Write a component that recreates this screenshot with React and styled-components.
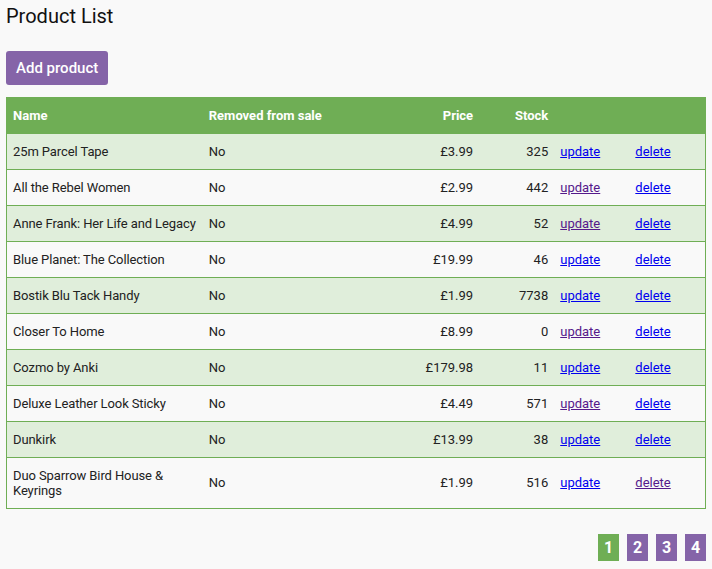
import React from "react";
import styled, { createGlobalStyle, css } from "styled-components";

const products = [
  { name: "25m Parcel Tape", removed: "No", price: "£3.99", stock: 325 },
  { name: "All the Rebel Women", removed: "No", price: "£2.99", stock: 442, updateSeen: true },
  { name: "Anne Frank: Her Life and Legacy", removed: "No", price: "£4.99", stock: 52, updateSeen: true },
  { name: "Blue Planet: The Collection", removed: "No", price: "£19.99", stock: 46 },
  { name: "Bostik Blu Tack Handy", removed: "No", price: "£1.99", stock: 7738 },
  { name: "Closer To Home", removed: "No", price: "£8.99", stock: 0, updateSeen: true },
  { name: "Cozmo by Anki", removed: "No", price: "£179.98", stock: 11 },
  { name: "Deluxe Leather Look Sticky", removed: "No", price: "£4.49", stock: 571, updateSeen: true },
  { name: "Dunkirk", removed: "No", price: "£13.99", stock: 38 },
  { name: "Duo Sparrow Bird House & Keyrings", removed: "No", price: "£1.99", stock: 516, deleteSeen: true },
];

const pages = [1, 2, 3, 4];

const App = () => {
  return (
    <>
      <GlobalStyle />
      <Page>
        <Title>Product List</Title>
        <AddButton type="button">Add product</AddButton>
        <Table>
          <colgroup>
            <col style={{ width: 196 }} />
            <col style={{ width: 200 }} />
            <col style={{ width: 76 }} />
            <col style={{ width: 75 }} />
            <col style={{ width: 75 }} />
            <col style={{ width: 76 }} />
          </colgroup>
          <thead>
            <HeadRow>
              <HeadCell>Name</HeadCell>
              <HeadCell>Removed from sale</HeadCell>
              <HeadCell $right>Price</HeadCell>
              <HeadCell $right>Stock</HeadCell>
              <HeadCell />
              <HeadCell />
            </HeadRow>
          </thead>
          <tbody>
            {products.map((p, i) => (
              <Row key={p.name} $odd={i % 2 === 0}>
                <Cell $tight>{p.name}</Cell>
                <Cell>{p.removed}</Cell>
                <Cell $right>{p.price}</Cell>
                <Cell $right>{p.stock}</Cell>
                <Cell>
                  <ActionLink href="#" $visited={p.updateSeen}>update</ActionLink>
                </Cell>
                <Cell>
                  <ActionLink href="#" $visited={p.deleteSeen}>delete</ActionLink>
                </Cell>
              </Row>
            ))}
          </tbody>
        </Table>
        <Pagination>
          {pages.map((n) => (
            <PageButton key={n} $active={n === 1}>{n}</PageButton>
          ))}
        </Pagination>
      </Page>
    </>
  );
};

const GlobalStyle = createGlobalStyle`
  html, body {
    margin: 0;
    padding: 0;
    background: #f9f9f9;
    font-family: Roboto, "Liberation Sans", sans-serif;
  }
`;

const Page = styled.div`
  width: 700px;
  padding: 0 6px;
  display: flex;
  flex-direction: column;
  align-items: flex-start;
`;

const Title = styled.h1`
  margin: 4px 0 0;
  font-size: 20px;
  line-height: 24px;
  font-weight: 400;
  color: #111;
`;

const AddButton = styled.button`
  margin-top: 23px;
  height: 34px;
  padding: 0 10px;
  border: none;
  border-radius: 3px;
  background: #8564a8;
  color: #fff;
  font-family: Roboto, "Liberation Sans", sans-serif;
  font-size: 15px;
  font-weight: 500;
`;

const Table = styled.table`
  margin-top: 12px;
  width: 700px;
  table-layout: fixed;
  border-collapse: collapse;
  border: 1px solid #6fae55;
  font-size: 13px;
  line-height: 15px;
  color: #222;
`;

const HeadRow = styled.tr`
  background: #6fae55;
  height: 36px;
`;

const HeadCell = styled.th`
  padding: 10px 6px;
  color: #fff;
  font-weight: 700;
  text-align: ${({ $right }) => ($right ? "right" : "left")};
`;

const Row = styled.tr`
  ${({ $odd }) => css`
    background: ${$odd ? "#e0eedb" : "#f9f9f9"};
    border-bottom: 1px solid #6fae55;
  `}
`;

const Cell = styled.td`
  padding: ${({ $tight }) => ($tight ? "10px 2px 10px 6px" : "10px 6px")};
  letter-spacing: ${({ $tight }) => ($tight ? "-0.1px" : "normal")};
  vertical-align: middle;
  text-align: ${({ $right }) => ($right ? "right" : "left")};
`;

const ActionLink = styled.a`
  color: ${({ $visited }) => ($visited ? "#551a8b" : "#0000ee")};
  text-decoration: underline;
`;

const Pagination = styled.div`
  align-self: flex-end;
  display: flex;
  gap: 8px;
  margin-top: 25px;
`;

const PageButton = styled.span`
  ${({ $active }) => css`
    display: flex;
    align-items: center;
    justify-content: center;
    width: 21px;
    height: 27px;
    background: ${$active ? "#6fae55" : "#8564a8"};
    color: #fff;
    font-size: 16px;
    font-weight: 700;
  `}
`;

export default App;
